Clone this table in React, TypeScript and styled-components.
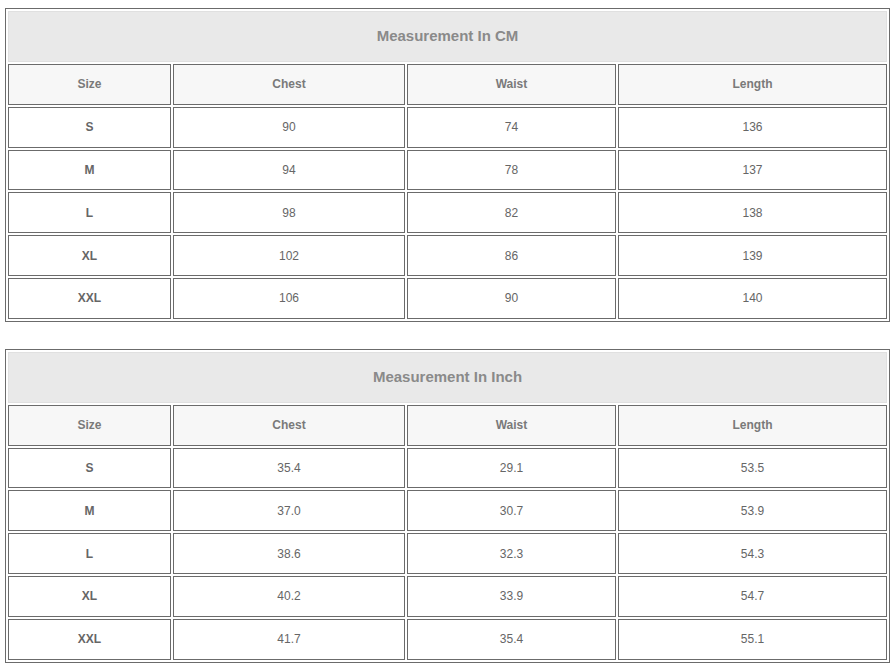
import React from "react";
import styled, { createGlobalStyle } from "styled-components";

const Global = createGlobalStyle`
  html, body { margin: 0; padding: 0; background: #fff; }
  body { font-family: "Liberation Sans", Arial, sans-serif; }
`;

const Page = styled.div`
  padding: 8px 3px 0 5px;
  display: flex;
  flex-direction: column;
  gap: 27px;
`;

const Table = styled.table`
  width: 885px;
  table-layout: fixed;
  border-collapse: separate;
  border-spacing: 2px;
  border: 1px solid #6b6b6b;
  font-family: "Liberation Sans", Arial, sans-serif;
`;

const TitleCell = styled.th`
  height: 47px;
  padding: 0 0 2px;
  background: #e9e9e9;
  border: 1px solid #e0e0e0;
  color: #8a8a8a;
  font-size: 15px;
  font-weight: bold;
  text-align: center;
`;

const Cell = styled.td<{ $head?: boolean; $bold?: boolean }>`
  height: 38.8px;
  padding: 0;
  border: 1px solid #6b6b6b;
  background: ${(p) => (p.$head ? "#f7f7f7" : "#fff")};
  color: ${(p) => (p.$head ? "#7a7a7a" : "#666")};
  font-size: 12px;
  font-weight: ${(p) => (p.$bold ? "bold" : "normal")};
  text-align: center;
  vertical-align: middle;
`;

type Row = [string, string, string, string];

const cmRows: Row[] = [
  ["S", "90", "74", "136"],
  ["M", "94", "78", "137"],
  ["L", "98", "82", "138"],
  ["XL", "102", "86", "139"],
  ["XXL", "106", "90", "140"],
];

const inchRows: Row[] = [
  ["S", "35.4", "29.1", "53.5"],
  ["M", "37.0", "30.7", "53.9"],
  ["L", "38.6", "32.3", "54.3"],
  ["XL", "40.2", "33.9", "54.7"],
  ["XXL", "41.7", "35.4", "55.1"],
];

const widths = [163, 232, 209, 269];

function SizeTable({ title, rows }: { title: string; rows: Row[] }) {
  return (
    <Table>
      <colgroup>
        {widths.map((w, i) => (
          <col key={i} style={{ width: w }} />
        ))}
      </colgroup>
      <thead>
        <tr>
          <TitleCell colSpan={4}>{title}</TitleCell>
        </tr>
      </thead>
      <tbody>
        <tr>
          {["Size", "Chest", "Waist", "Length"].map((h) => (
            <Cell key={h} $head $bold>
              {h}
            </Cell>
          ))}
        </tr>
        {rows.map((r) => (
          <tr key={r[0]}>
            {r.map((v, i) => (
              <Cell key={i} $bold={i === 0}>
                {v}
              </Cell>
            ))}
          </tr>
        ))}
      </tbody>
    </Table>
  );
}

export default function App() {
  return (
    <>
      <Global />
      <Page>
        <SizeTable title="Measurement In CM" rows={cmRows} />
        <SizeTable title="Measurement In Inch" rows={inchRows} />
      </Page>
    </>
  );
}
